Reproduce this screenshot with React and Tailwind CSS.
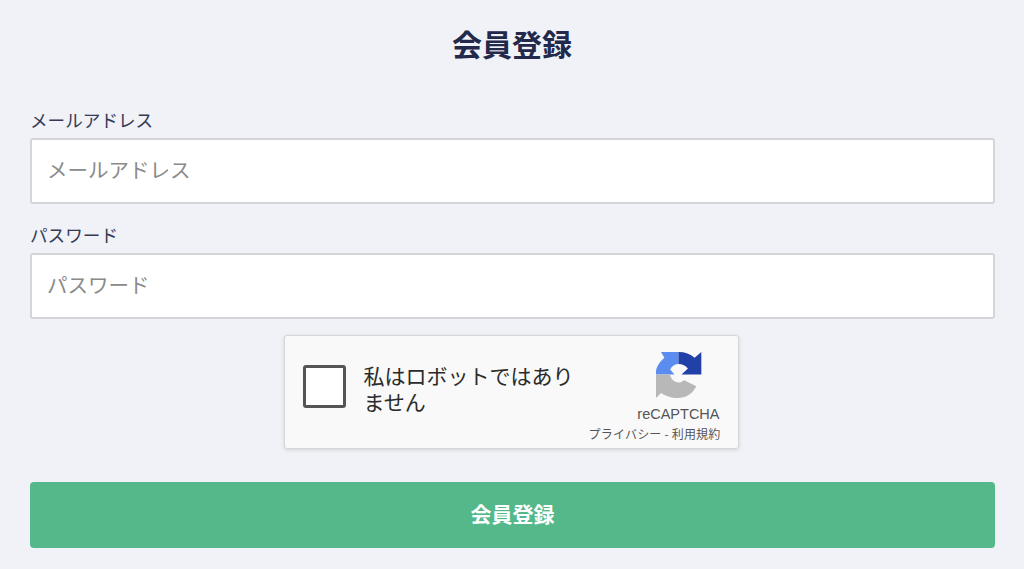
import React from 'react';

const FONT = "font-['Noto_Sans_CJK_JP','Noto_Sans',sans-serif]";

const RecaptchaLogo = () => (
  <svg width="46" height="46" viewBox="48 38 137 137" className="block">
    {/* blue */}
    <path d="M115 38 L115 74 C104 74 96 80 90 90 L103 105 L48 105 L48 95 C50 80 60 66 73 55 L63 38 Z" fill="#5a8def" />
    {/* dark blue */}
    <path d="M115 38 C135 38 150 44 163 55 L183 38 L183 105 L124 105 L143 87 C136 79 127 74 115 74 Z" fill="#2140a8" />
    {/* grey */}
    <path d="M48 105 L90 105 C92 118 104 132 122 128 L132 122 L168 140 C155 165 135 175 113 175 C93 175 75 168 63 160 L48 175 Z" fill="#b8b8b8" />
  </svg>
);

const Field = ({ label, type }) => (
  <div className="flex flex-col">
    <label className="text-[17.6px] leading-[26px] text-[#343a55] mb-[5px]">{label}</label>
    <input
      type={type}
      placeholder={label}
      className="h-[66px] w-full bg-white border-2 border-[#d3d5d8] rounded-[3px] pl-[15px] pr-[15px] pb-[5px] text-[20.5px] placeholder:text-[#8a8a8a] outline-none"
    />
  </div>
);

const App = () => {
  return (
    <div className={`${FONT} w-[1024px] h-[569px] overflow-hidden bg-[#f0f2f7] px-[30px] pt-[22px]`}>
      <h1 className="text-[30px] leading-[43px] font-bold text-center text-[#22294a] mb-[42px]">会員登録</h1>

      <div className="flex flex-col gap-[18px] w-[965px]">
        <Field label="メールアドレス" type="email" />
        <Field label="パスワード" type="password" />
      </div>

      {/* reCAPTCHA */}
      <div className="flex justify-center mt-[16px] w-[962px]">
        <div className="w-[455px] h-[114px] bg-[#f9f9f9] border border-[#d6d6d6] rounded-[3px] shadow-[0_1px_4px_rgba(0,0,0,0.12)] flex pl-[18px] pr-[17px]">
          <div className="w-[43px] h-[43px] mt-[29px] bg-white border-[3px] border-[#555555] rounded-[3px] shrink-0" />
          <div className="w-[220px] ml-[18px] mt-[26px] text-[21px] leading-[26px] text-[#2b2b2b]">私はロボットではありません</div>
          <div className="ml-auto flex flex-col items-end pt-[16px]">
            <div className="mr-[19px]">
              <RecaptchaLogo />
            </div>
            <div className="text-[14.5px] leading-[18px] mt-[7px] mr-[1px] text-[#555555] font-['Liberation_Sans',sans-serif]">reCAPTCHA</div>
            <div className="text-[12px] leading-[16px] mt-[3px] text-[#555555] whitespace-nowrap tracking-[0.2px]">プライバシー - 利用規約</div>
          </div>
        </div>
      </div>

      <button className="mt-[33px] w-[965px] h-[66px] bg-[#55b88a] rounded-[4px] text-white text-[21px] font-bold pb-[3px]">会員登録</button>
    </div>
  );
};

export default App;
